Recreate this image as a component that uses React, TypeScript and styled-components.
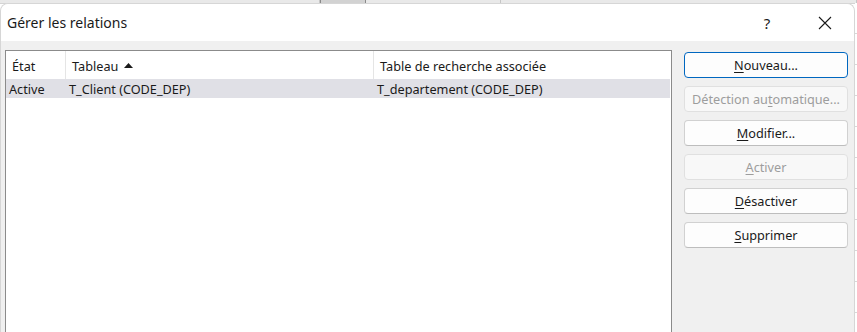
import React from 'react';
import styled, { createGlobalStyle } from 'styled-components';

const GlobalStyle = createGlobalStyle`
  html, body {
    margin: 0;
    padding: 0;
    background: #ffffff;
    overflow: hidden;
  }
  body {
    font-family: 'Noto Sans', 'Open Sans', sans-serif;
    color: #1a1a1a;
  }
`;

interface Action {
  label: string;
  key: number;
  primary?: boolean;
  disabled?: boolean;
}

const actions: Action[] = [
  { label: 'Nouveau...', key: 0, primary: true },
  { label: 'Détection automatique...', key: 12, disabled: true },
  { label: 'Modifier...', key: 0 },
  { label: 'Activer', key: 0, disabled: true },
  { label: 'Désactiver', key: 0 },
  { label: 'Supprimer', key: 0 },
];

const columns = [
  { title: 'État', width: 60 },
  { title: 'Tableau', width: 308, sorted: true },
  { title: 'Table de recherche associée', width: 0 },
];

const rows = [
  { state: 'Active', table: 'T_Client (CODE_DEP)', lookup: 'T_departement (CODE_DEP)', selected: true },
];

// the access key letter gets underlined like a Windows mnemonic
const Mnemonic: React.FC<{ label: string; index: number }> = ({ label, index }) => (
  <>
    {label.slice(0, index)}
    <u>{label[index]}</u>
    {label.slice(index + 1)}
  </>
);

export default function App() {
  return (
    <>
      <GlobalStyle />
      <Screen>
        <SheetEdge>
          <SheetCell $w={320} />
          <SheetCell $w={46} $active />
          <SheetCell $w={135} />
          <SheetCell $w={356} />
        </SheetEdge>
        <Stage>
          <Dialog>
            <TitleBar>
              <Title>Gérer les relations</Title>
              <TitleButtons>
                <TitleButton>?</TitleButton>
                <TitleButton>
                  <svg width="14" height="14" viewBox="0 0 14 14">
                    <path d="M1 1 L13 13 M13 1 L1 13" stroke="#1a1a1a" strokeWidth="1.1" fill="none" />
                  </svg>
                </TitleButton>
              </TitleButtons>
            </TitleBar>
            <Body>
              <ListView>
                <HeaderRow>
                  {columns.map((col, i) => (
                    <HeaderCell key={col.title} $width={col.width} $last={i === columns.length - 1}>
                      {col.title}
                      {col.sorted && (
                        <svg width="9" height="5" viewBox="0 0 9 5" style={{ marginLeft: 6 }}>
                          <path d="M0 5 L4.5 0 L9 5 Z" fill="#1a1a1a" />
                        </svg>
                      )}
                    </HeaderCell>
                  ))}
                </HeaderRow>
                {rows.map((row) => (
                  <Row key={row.table} $selected={row.selected}>
                    <Cell $width={60}>{row.state}</Cell>
                    <Cell $width={308}>{row.table}</Cell>
                    <Cell $width={0}>{row.lookup}</Cell>
                  </Row>
                ))}
              </ListView>
              <ButtonColumn>
                {actions.map((a) => (
                  <Button key={a.label} $primary={a.primary} disabled={a.disabled}>
                    <Mnemonic label={a.label} index={a.key} />
                  </Button>
                ))}
              </ButtonColumn>
            </Body>
          </Dialog>
          <SheetGutter />
        </Stage>
      </Screen>
    </>
  );
}

// Styled Components Definitions
const Screen = styled.div`
  width: 857px;
  height: 332px;
  display: flex;
  flex-direction: column;
  overflow: hidden;
`;

const SheetEdge = styled.div`
  height: 3px;
  display: flex;
  background: #e9e9e9;
  border-bottom: 1px solid #d4d4d4;
  flex-shrink: 0;
`;

const SheetCell = styled.div<{ $w: number; $active?: boolean }>`
  width: ${(p) => p.$w}px;
  flex-shrink: 0;
  box-sizing: border-box;
  border-right: 1px solid #c6c6c6;
  background: ${(p) => (p.$active ? '#d2d2d2' : 'transparent')};
  ${(p) => (p.$active ? 'border-left: 1px solid #8a8a8a; border-right-color: #8a8a8a;' : '')}
`;

const Stage = styled.div`
  flex: 1;
  display: flex;
  margin-top: -1px;
  min-height: 0;
`;

const Dialog = styled.div`
  width: 855px;
  flex-shrink: 0;
  display: flex;
  flex-direction: column;
  border-radius: 8px 8px 0 0;
  border: 1px solid #d6d6d6;
  border-bottom: none;
  box-sizing: border-box;
  background: #f0f0f0;
  overflow: hidden;
`;

const SheetGutter = styled.div`
  flex: 1;
  background: repeating-linear-gradient(
    to bottom,
    #ffffff 0px,
    #ffffff 30px,
    #d8d8d8 30px,
    #d8d8d8 31px
  );
`;

const TitleBar = styled.div`
  height: 37px;
  display: flex;
  align-items: center;
  justify-content: space-between;
  background: #ffffff;
  flex-shrink: 0;
`;

const Title = styled.div`
  font-size: 14px;
  padding-left: 6px;
  color: #1a1a1a;
`;

const TitleButtons = styled.div`
  display: flex;
  align-items: center;
`;

const TitleButton = styled.div`
  width: 58px;
  height: 34px;
  display: flex;
  align-items: center;
  justify-content: center;
  font-size: 15px;
  color: #1a1a1a;
`;

const Body = styled.div`
  flex: 1;
  display: flex;
  gap: 12px;
  padding: 9px 7px 0 4px;
  min-height: 0;
`;

const ListView = styled.div`
  width: 667px;
  flex-shrink: 0;
  box-sizing: border-box;
  background: #ffffff;
  border: 1px solid #8b8b8b;
  border-bottom: none;
  font-size: 12.7px;
`;

const HeaderRow = styled.div`
  display: flex;
  height: 28px;
`;

const HeaderCell = styled.div<{ $width: number; $last?: boolean }>`
  ${(p) => (p.$width ? `width: ${p.$width}px;` : 'flex: 1;')}
  flex-shrink: 0;
  box-sizing: border-box;
  display: flex;
  align-items: center;
  padding: 1px 0 0 6px;
  border-right: ${(p) => (p.$last ? 'none' : '1px solid #e5e5e5')};
  color: #1a1a1a;
`;

const Row = styled.div<{ $selected?: boolean }>`
  display: flex;
  height: 19px;
  align-items: center;
  margin-right: 1px;
  background: ${(p) => (p.$selected ? '#e0e0e6' : 'transparent')};
`;

const Cell = styled.div<{ $width: number }>`
  ${(p) => (p.$width ? `width: ${p.$width}px;` : 'flex: 1;')}
  flex-shrink: 0;
  box-sizing: border-box;
  padding-left: 3px;
  white-space: nowrap;
  color: #1a1a1a;
`;

const ButtonColumn = styled.div`
  display: flex;
  flex-direction: column;
  gap: 8px;
  width: 164px;
  flex-shrink: 0;
  padding-top: 2px;
`;

const Button = styled.button<{ $primary?: boolean }>`
  height: 26px;
  box-sizing: border-box;
  border-radius: 4px;
  border: 1px solid ${(p) => (p.$primary ? '#0067c0' : '#d1d1d1')};
  border-bottom-color: ${(p) => (p.$primary ? '#0067c0' : '#bdbdbd')};
  background: #fdfdfd;
  font-family: 'Noto Sans', 'Open Sans', sans-serif;
  font-size: 12.7px;
  color: #1a1a1a;
  padding: 0;

  &:disabled {
    color: #9d9d9d;
    border-color: #e0e0e0;
    background: #f8f8f8;
  }

  u {
    text-underline-offset: 2px;
  }
`;
